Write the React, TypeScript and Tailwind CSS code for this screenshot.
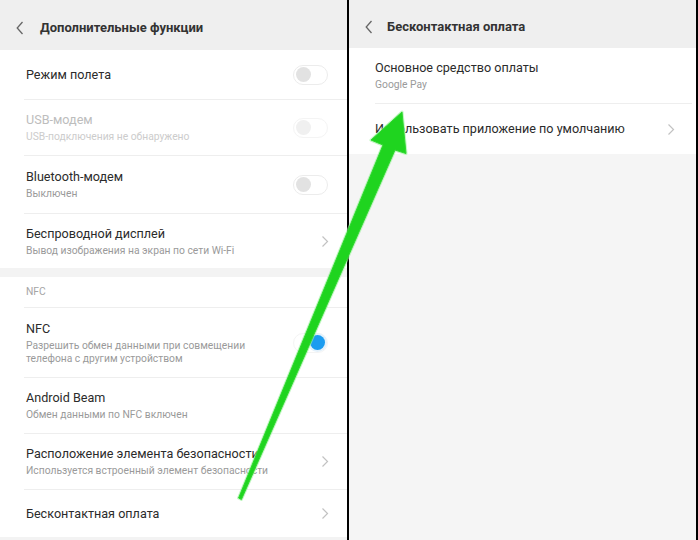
import React from 'react';

type Row = {
  title: string;
  sub?: string[];
  h: string;
  control?: 'off' | 'offDisabled' | 'on' | 'chevron';
  disabled?: boolean;
};

const Chevron = () => (
  <svg width="8" height="13" viewBox="0 0 8 13" className="shrink-0">
    <path d="M1.5 1.5 L6.5 6.5 L1.5 11.5" fill="none" stroke="#c2c2c2" strokeWidth="1.2" />
  </svg>
);

const BackChevron = () => (
  <svg width="8" height="14" viewBox="0 0 8 14" className="shrink-0">
    <path d="M6.5 1 L1.2 7 L6.5 13" fill="none" stroke="#666" strokeWidth="1.3" />
  </svg>
);

const Toggle: React.FC<{ on?: boolean; faded?: boolean }> = ({ on, faded }) => (
  <div
    className={`flex h-[20px] w-[35px] items-center rounded-full border px-[2px] ${
      faded ? 'border-[#f4f4f4]' : 'border-[#ececec]'
    } ${on ? 'justify-end' : 'justify-start'}`}
  >
    <div
      className={`h-[15px] w-[15px] rounded-full ${
        on ? 'bg-[#1b9cf0] shadow-[0_0_0_2px_#e3f1fb]' : faded ? 'bg-[#f0f0f0]' : 'bg-[#e2e2e2]'
      }`}
    />
  </div>
);

const Item: React.FC<{ row: Row }> = ({ row }) => (
  <div className={`flex ${row.h} items-center pl-[26px] pr-[19px]`}>
    <div className="flex min-w-0 flex-1 flex-col">
      <span className={`text-[12.6px] leading-[16px] ${row.disabled ? 'text-[#bdbdbd]' : 'text-[#2b2b2b]'}`}>
        {row.title}
      </span>
      {row.sub &&
        row.sub.map((s, i) => (
          <span
            key={s}
            className={`text-[10.3px] leading-[13px] ${row.disabled ? 'text-[#cccccc]' : 'text-[#9a9a9a]'} ${
              i === 0 ? 'mt-[2px]' : ''
            }`}
          >
            {s}
          </span>
        ))}
    </div>
    {row.control === 'chevron' && (
      <div className="mr-[-1px]">
        <Chevron />
      </div>
    )}
    {row.control === 'off' && <Toggle />}
    {row.control === 'offDisabled' && <Toggle faded />}
    {row.control === 'on' && <Toggle on faded />}
  </div>
);

const Divider: React.FC<{ ml?: string }> = ({ ml = 'ml-6' }) => <div className={`${ml} h-px bg-[#eeeeee]`} />;

const top: Row[] = [
  { title: 'Режим полета', h: 'h-[49px]', control: 'off' },
  { title: 'USB-модем', sub: ['USB-подключения не обнаружено'], h: 'h-[55px]', control: 'offDisabled', disabled: true },
  { title: 'Bluetooth-модем', sub: ['Выключен'], h: 'h-[57px]', control: 'off' },
  { title: 'Беспроводной дисплей', sub: ['Вывод изображения на экран по сети Wi-Fi'], h: 'h-[54px]', control: 'chevron' },
];

const nfc: Row[] = [
  {
    title: 'NFC',
    sub: ['Разрешить обмен данными при совмещении', 'телефона с другим устройством'],
    h: 'h-[69px]',
    control: 'on',
  },
  { title: 'Android Beam', sub: ['Обмен данными по NFC включен'], h: 'h-[55px]' },
  {
    title: 'Расположение элемента безопасности',
    sub: ['Используется встроенный элемент безопасности'],
    h: 'h-[55px]',
    control: 'chevron',
  },
  { title: 'Бесконтактная оплата', h: 'h-[47px]', control: 'chevron' },
];

export default function App() {
  return (
    <div className="relative flex h-[540px] w-[698px] overflow-hidden bg-white font-[Roboto,sans-serif]">
      {/* left screen */}
      <div className="flex w-[347px] shrink-0 flex-col bg-white">
        <div className="flex h-[50px] items-center gap-[16px] bg-[#efefef] pl-[16px] pt-[6px]">
          <BackChevron />
          <span className="text-[13px] font-bold text-[#333]">Дополнительные функции</span>
        </div>
        {top.map((r, i) => (
          <React.Fragment key={r.title}>
            {i > 0 && <Divider />}
            <Item row={r} />
          </React.Fragment>
        ))}
        <div className="h-[9px] bg-[#f3f3f3]" />
        <div className="flex h-[30px] items-center pl-[26px] text-[10.3px] text-[#a5a5a5]">NFC</div>
        {nfc.map((r) => (
          <React.Fragment key={r.title}>
            <Divider />
            <Item row={r} />
          </React.Fragment>
        ))}
        <div className="flex-1 bg-[#f3f3f3]" />
      </div>

      {/* right screen */}
      <div className="flex flex-1 flex-col border-l-2 border-r-2 border-black bg-[#f5f5f5]">
        <div className="flex h-[48px] items-center gap-[14px] bg-[#efefef] pl-[16px] pt-[6px]">
          <BackChevron />
          <span className="text-[13px] font-bold text-[#333]">Бесконтактная оплата</span>
        </div>
        <div className="bg-white">
          <div className="flex h-[55px] flex-col justify-center pl-[26px]">
            <span className="text-[12.6px] leading-[16px] text-[#2b2b2b]">Основное средство оплаты</span>
            <span className="mt-[2px] text-[10.3px] leading-[13px] text-[#9a9a9a]">Google Pay</span>
          </div>
          <Divider ml="ml-[26px] mr-[4px]" />
          <div className="flex h-[50px] items-center pl-[26px] pr-[21px]">
            <span className="flex-1 text-[12.6px] text-[#2b2b2b]">Использовать приложение по умолчанию</span>
            <Chevron />
          </div>
        </div>
      </div>

      {/* green arrow annotation */}
      <svg className="pointer-events-none absolute inset-0" width="698" height="540" viewBox="0 0 698 540">
        <polygon
          points="238.6,498 383,145 371,140 402,112 406,153.5 395,150 241.4,499.5"
          fill="#9af29a"
          stroke="#9af29a"
          strokeWidth="3"
          strokeLinejoin="round"
          opacity="0.6"
        />
        <polygon
          points="238.6,498 383,145 371,140 402,112 406,153.5 395,150 241.4,499.5"
          fill="#1fd41f"
          stroke="#2ed82e"
          strokeWidth="1"
          strokeLinejoin="round"
        />
      </svg>
    </div>
  );
}
